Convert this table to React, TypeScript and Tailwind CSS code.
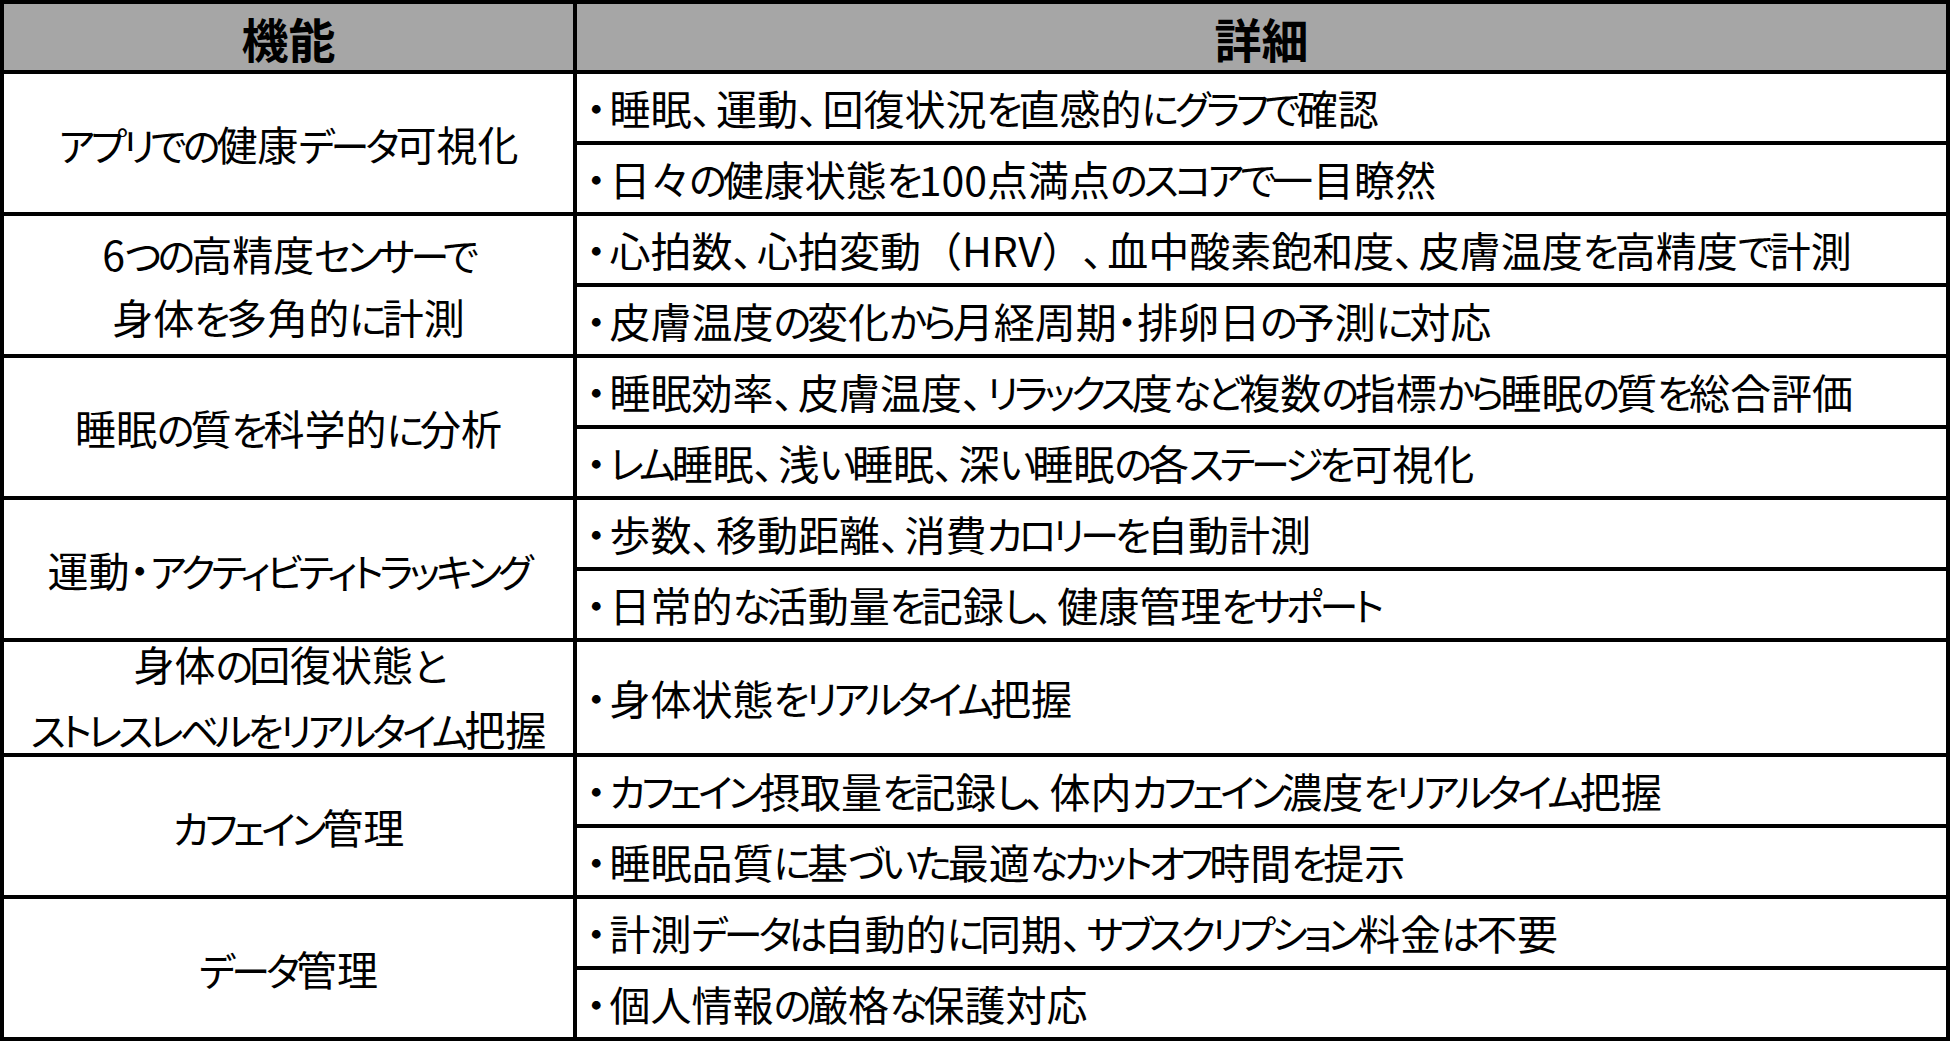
const rows = [
  {
    title: ['アプリでの健康データ可視化'],
    details: ['睡眠、運動、回復状況を直感的にグラフで確認', '日々の健康状態を100点満点のスコアで一目瞭然'],
  },
  {
    title: ['6つの高精度センサーで', '身体を多角的に計測'],
    details: ['心拍数、心拍変動（HRV）、血中酸素飽和度、皮膚温度を高精度で計測', '皮膚温度の変化から月経周期・排卵日の予測に対応'],
  },
  {
    title: ['睡眠の質を科学的に分析'],
    details: ['睡眠効率、皮膚温度、リラックス度など複数の指標から睡眠の質を総合評価', 'レム睡眠、浅い睡眠、深い睡眠の各ステージを可視化'],
  },
  {
    title: ['運動・アクティビティトラッキング'],
    details: ['歩数、移動距離、消費カロリーを自動計測', '日常的な活動量を記録し、健康管理をサポート'],
  },
  {
    title: ['身体の回復状態と', 'ストレスレベルをリアルタイム把握'],
    details: ['身体状態をリアルタイム把握'],
  },
  {
    title: ['カフェイン管理'],
    details: ['カフェイン摂取量を記録し、体内カフェイン濃度をリアルタイム把握', '睡眠品質に基づいた最適なカットオフ時間を提示'],
  },
  {
    title: ['データ管理'],
    details: ['計測データは自動的に同期、サブスクリプション料金は不要', '個人情報の厳格な保護対応'],
  },
];

// row heights incl. bottom border (container inner height is 1033)
const rowHeights = ['h-[142px]', 'h-[142px]', 'h-[142px]', 'h-[142px]', 'h-[115px]', 'h-[142px]', 'h-[138px]'];

type Kind = 'kanji' | 'kana' | 'comma' | 'paren' | 'other';

function kindOf(ch: string): Kind {
  if (ch === '、') return 'comma';
  if ('（）'.includes(ch)) return 'paren';
  if (/[\u3400-\u9fff々]/.test(ch)) return 'kanji';
  if (/[\u3041-\u30fa\u30fc]/.test(ch)) return 'kana';
  return 'other';
}

// the source font has narrow kana next to full-width kanji
function Txt({ text }: { text: string }) {
  const parts: { s: string; k: Kind }[] = [];
  for (const ch of text) {
    const k = kindOf(ch);
    const prev = parts[parts.length - 1];
    if (prev && prev.k === k && k !== 'comma') prev.s += ch;
    else parts.push({ s: ch, k });
  }
  return (
    <>
      {parts.map((p, i) => {
        if (p.k === 'paren') return <span key={i} className="[font-feature-settings:normal]">{p.s}</span>;
        if (p.k === 'comma') return <span key={i} className="mr-[4px]">{p.s}</span>;
        if (p.k === 'kana') return <span key={i} className="text-[39px] tracking-[-4px]">{p.s}</span>;
        return <span key={i}>{p.s}</span>;
      })}
    </>
  );
}

export default function App() {
  return (
    <div className="w-[1950px] h-[1041px] bg-white border-4 border-black flex flex-col font-['Noto_Sans_CJK_JP',sans-serif] text-black overflow-hidden [font-feature-settings:'palt']">
      {/* header */}
      <div className="flex h-[70px] shrink-0 border-b-4 border-black bg-[#a6a6a6]">
        <div className="w-[573px] shrink-0 border-r-4 border-black flex items-center justify-center text-[47px] font-bold leading-none">
          機能
        </div>
        <div className="flex-1 flex items-center justify-center text-[47px] font-bold leading-none">
          詳細
        </div>
      </div>

      {rows.map((row, i) => {
        const last = i === rows.length - 1;
        return (
          <div
            key={i}
            className={`flex shrink-0 ${rowHeights[i]} ${last ? '' : 'border-b-4 border-black'}`}
          >
            <div
              className={`w-[573px] shrink-0 border-r-4 border-black flex flex-col items-center justify-center text-[41px] whitespace-nowrap ${i === 4 ? 'leading-[64px] pb-[4px]' : 'leading-[62px]'}`}
            >
              {row.title.map(t => (
                <span key={t}>
                  <Txt text={t} />
                </span>
              ))}
            </div>
            <div className="flex-1 flex flex-col">
              {row.details.map((d, j) => {
                const lastSub = j === row.details.length - 1;
                return (
                  <div
                    key={d}
                    className={`flex-1 flex items-center pl-[9px] text-[41px] leading-none whitespace-nowrap ${lastSub ? '' : 'border-b-4 border-black'}`}
                  >
                    <span className="mr-[3px]">・</span>
                    <Txt text={d} />
                  </div>
                );
              })}
            </div>
          </div>
        );
      })}
    </div>
  );
}
